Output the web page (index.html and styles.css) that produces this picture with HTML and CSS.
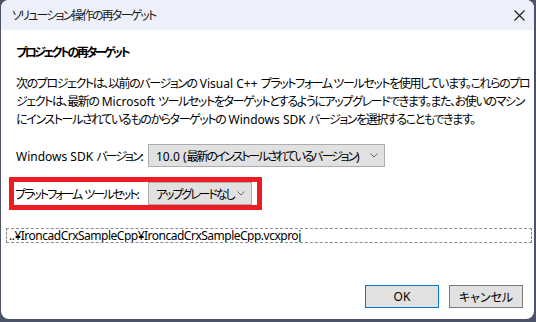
FILE: index.html
```html
<!DOCTYPE html>
<html lang="ja">
<head>
  <meta charset="UTF-8" />
  <title>ソリューション操作の再ターゲット</title>
  <link rel="stylesheet" href="styles.css">
</head>
<body>
  <div class="dialog">
    <div class="titlebar">
      <span class="title">ソリューション操作の再ターゲット</span>
      <svg class="close" width="11" height="11" viewBox="0 0 11 11">
        <path d="M0.5 0.5L10.5 10.5M10.5 0.5L0.5 10.5" stroke="#1a1a1a" stroke-width="1.1" fill="none"/>
      </svg>
    </div>

    <div class="content">
      <h1 class="heading">プロジェクトの再ターゲット</h1>
      <p class="description">
        次のプロジェクトは、以前のバージョンの<span class="latin"> Visual C++ </span>プラットフォーム ツールセットを使用しています。これらのプロ<br>
        ジェクトは、最新の<span class="latin"> Microsoft </span>ツールセットをターゲットとするようにアップグレードできます。また、お使いのマシン<br>
        にインストールされているものからターゲットの<span class="latin"> Windows SDK </span>バージョンを選択することもできます。
      </p>

      <div class="field">
        <label class="field-label"><span class="latin">Windows SDK </span>バージョン:</label>
        <div class="select select-sdk">
          <span class="select-value"><span class="latin">10.0 (</span>最新のインストールされているバージョン<span class="latin">)</span></span>
          <svg class="chevron" width="8" height="5" viewBox="0 0 8 5"><path d="M0.5 0.5L4 4L7.5 0.5" stroke="#6d6d6d" fill="none"/></svg>
        </div>
      </div>

      <div class="highlight">
        <div class="field">
          <label class="field-label toolset-label">プラットフォーム<span class="latin"> </span>ツールセット:</label>
          <div class="select select-toolset">
            <span class="select-value">アップグレードなし</span>
            <svg class="chevron" width="8" height="5" viewBox="0 0 8 5"><path d="M0.5 0.5L4 4L7.5 0.5" stroke="#6d6d6d" fill="none"/></svg>
          </div>
        </div>
      </div>

      <div class="project-path">..¥IroncadCrxSampleCpp¥IroncadCrxSampleCpp.vcxproj</div>
    </div>

    <div class="footer">
      <button type="button" class="btn btn-default"><span class="latin">OK</span></button>
      <button type="button" class="btn">キャンセル</button>
    </div>
  </div>
</body>
</html>
```

FILE: styles.css
```css
* {
  box-sizing: border-box;
}

body {
  margin: 0;
  background: #4c5268;
  font-family: "Noto Sans", "Noto Sans CJK JP", sans-serif;
  font-feature-settings: "palt";
  font-size: 12px;
  letter-spacing: -1.4px;
  color: #000;
  white-space: nowrap;
}

.latin {
  letter-spacing: 0;
}

.dialog {
  width: 533px;
  height: 319px;
  margin-left: 1px;
  background: #fff;
  border-radius: 8px;
  overflow: hidden;
  display: flex;
  flex-direction: column;
}

.titlebar {
  height: 30px;
  flex: none;
  background: #eef0f9;
  display: flex;
  align-items: center;
  justify-content: space-between;
  padding: 0 9px 0 11px;
}

.title {
  color: #1a1a1a;
  letter-spacing: -1.8px;
}

.content {
  flex: 1;
  padding: 15px 0 0 15px;
  display: flex;
  flex-direction: column;
  align-items: flex-start;
}

.heading {
  margin: 0;
  font-size: 12px;
  font-weight: bold;
  line-height: 16px;
  letter-spacing: -2.5px;
}

.description {
  margin: 14px 0 0;
  line-height: 18px;
}

.field {
  display: flex;
  align-items: center;
  height: 23px;
}

.content > .field {
  margin-top: 15px;
}

.field-label {
  width: 132px;
  flex: none;
  letter-spacing: -2px;
}

.toolset-label {
  width: 133px;
}

.select {
  height: 23px;
  background: #e1e1e1;
  border: 1px solid #adadad;
  display: flex;
  align-items: center;
  justify-content: space-between;
  padding: 0 6px 0 7px;
  overflow: hidden;
}

.select-value {
  letter-spacing: -2.1px;
}

.chevron {
  flex: none;
}

.select-sdk {
  width: 237px;
}

.select-toolset {
  width: 104px;
}

.highlight {
  margin: 10px 0 0 -7px;
  border: 5px solid #ed1c24;
  padding: 0 5px 0 1px;
}

.project-path {
  margin: 18px 0 0 -10px;
  width: 526px;
  height: 15px;
  line-height: 14px;
  border: 1px dashed #8c8c8c;
  padding-left: 2px;
  letter-spacing: -0.5px;
  overflow: hidden;
}

.footer {
  flex: none;
  display: flex;
  justify-content: flex-end;
  gap: 10px;
  padding: 0 11px 11px 0;
}

.btn {
  width: 74px;
  height: 23px;
  background: #e1e1e1;
  border: 1px solid #7a7a7a;
  font: inherit;
  color: #000;
  padding: 0;
}

.btn-default {
  border-color: #0078d7;
}
```
